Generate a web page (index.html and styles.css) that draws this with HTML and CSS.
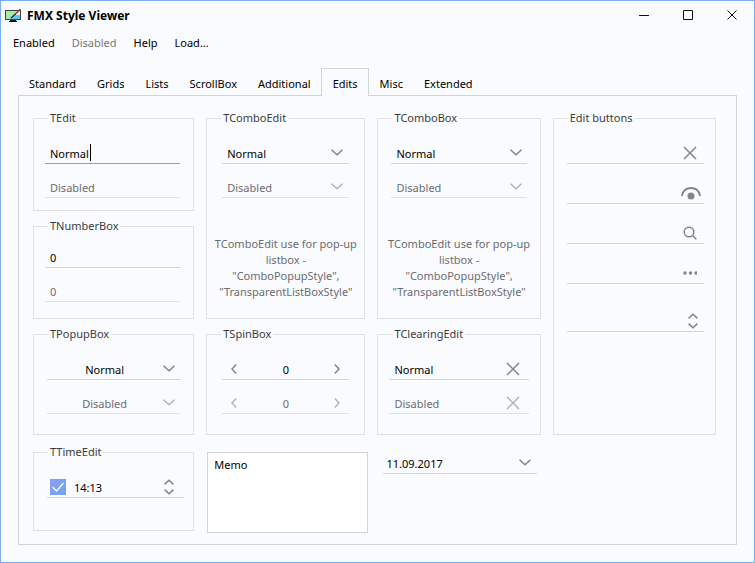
FILE: index.html
```html
<!doctype html>
<html lang="en">
  <head>
    <meta charset="utf-8">
    <meta name="viewport" content="width=device-width, initial-scale=1">

    <title>FMX Style Viewer</title>

    <link rel="stylesheet" href="styles.css">
  </head>
  <body>
    <!-- shared icons -->
    <svg class="sprite" aria-hidden="true">
      <symbol id="chevron" viewBox="0 0 12 7"><path d="M.5 .8 6 5.8 11.5 .8"/></symbol>
      <symbol id="left" viewBox="0 0 6 10"><path d="M5.2 .6 1 5 5.2 9.4"/></symbol>
      <symbol id="right" viewBox="0 0 6 10"><path d="M.8 .6 5 5 .8 9.4"/></symbol>
      <symbol id="cross" viewBox="0 0 14 14"><path d="M1 1 13 13M13 1 1 13"/></symbol>
      <symbol id="updown" viewBox="0 0 10 16"><path d="M.6 5.4 5 1.2 9.4 5.4M.6 10.6 5 14.8 9.4 10.6"/></symbol>
    </svg>

    <div class="window">
      <header class="titlebar">
        <svg class="logo" width="16" height="14" viewBox="0 0 16 14">
          <rect x="0" y="1" width="16" height="10" fill="#3c4448"/>
          <rect x="1" y="2" width="14" height="8" fill="#e6fbff"/>
          <path d="M1 2h11L6 10H1z" fill="#a6ee9e"/>
          <path d="M8 6h7v4H5z" fill="#5cc8f4"/>
          <path d="M5 11h6v1h1v1H4v-1h1z" fill="#111"/>
          <path d="M15.500 0 10 5.500" stroke="#b3262c" stroke-width="1.500"/>
          <path d="M10.500 5 6 9" stroke="#333" stroke-width="1.500"/>
        </svg>
        <h1>FMX Style Viewer</h1>
        <div class="window-buttons">
          <button type="button" aria-label="Minimize"><svg width="11" height="11"><path d="M0 5.500h10"/></svg></button>
          <button type="button" aria-label="Maximize"><svg width="11" height="11"><path d="M.5 .5h9v9h-9z"/></svg></button>
          <button type="button" aria-label="Close"><svg width="11" height="11"><path d="M.5 .5l9 9M9.500 .5l-9 9"/></svg></button>
        </div>
      </header>

      <nav class="menu">
        <button type="button">Enabled</button>
        <button type="button" disabled>Disabled</button>
        <button type="button">Help</button>
        <button type="button">Load...</button>
      </nav>

      <div class="tabs" role="tablist">
        <button type="button" role="tab">Standard</button>
        <button type="button" role="tab">Grids</button>
        <button type="button" role="tab">Lists</button>
        <button type="button" role="tab">ScrollBox</button>
        <button type="button" role="tab">Additional</button>
        <button type="button" role="tab" class="active" aria-selected="true">Edits</button>
        <button type="button" role="tab">Misc</button>
        <button type="button" role="tab">Extended</button>
      </div>

      <main class="panel" role="tabpanel">
        <fieldset>
          <legend>TEdit</legend>
          <div class="fields shifted">
            <div class="field focused">
              <input type="text" value="Normal" aria-label="Edit">
              <span class="caret"></span>
            </div>
            <div class="field disabled">
              <input type="text" value="Disabled" aria-label="Disabled edit" disabled>
            </div>
          </div>
        </fieldset>

        <fieldset class="tall">
          <legend>TComboEdit</legend>
          <div class="fields narrow">
            <div class="field">
              <input type="text" value="Normal" aria-label="Combo edit">
              <button type="button" aria-label="Open list"><svg width="12" height="7"><use href="#chevron"/></svg></button>
            </div>
            <div class="field disabled">
              <input type="text" value="Disabled" aria-label="Disabled combo edit" disabled>
              <button type="button" aria-label="Open list" disabled><svg width="12" height="7"><use href="#chevron"/></svg></button>
            </div>
          </div>
          <p>TComboEdit use for pop-up listbox - "ComboPopupStyle", "TransparentListBoxStyle"</p>
        </fieldset>

        <fieldset class="tall">
          <legend>TComboBox</legend>
          <div class="fields">
            <div class="field">
              <select aria-label="Combo box"><option>Normal</option></select>
              <svg class="arrow" width="12" height="7"><use href="#chevron"/></svg>
            </div>
            <div class="field disabled">
              <select aria-label="Disabled combo box" disabled><option>Disabled</option></select>
              <svg class="arrow" width="12" height="7"><use href="#chevron"/></svg>
            </div>
          </div>
          <p>TComboEdit use for pop-up listbox - "ComboPopupStyle", "TransparentListBoxStyle"</p>
        </fieldset>

        <fieldset class="taller">
          <legend>Edit buttons</legend>
          <div class="fields spaced">
            <div class="field">
              <input type="text" aria-label="Clear edit">
              <button type="button" aria-label="Clear"><svg width="14" height="14"><use href="#cross"/></svg></button>
            </div>
            <div class="field">
              <input type="text" aria-label="Password edit">
              <button type="button" class="flush" aria-label="Show password">
                <svg width="20" height="14" viewBox="0 0 20 14"><path d="M.8 10C2 4.500 5.500 2 10 2s8 2.500 9.200 8" stroke-width="1.800"/><circle class="solid" cx="10" cy="10" r="3.500"/></svg>
              </button>
            </div>
            <div class="field">
              <input type="text" aria-label="Search edit">
              <button type="button" aria-label="Search">
                <svg width="14" height="14" viewBox="0 0 14 14"><circle cx="6" cy="6" r="4.800"/><path d="M9.500 9.500 13.300 13.300"/></svg>
              </button>
            </div>
            <div class="field">
              <input type="text" aria-label="Ellipses edit">
              <button type="button" aria-label="More">
                <svg width="14" height="4" viewBox="1 0 14 4"><g class="solid"><circle cx="3" cy="2" r="1.700"/><circle cx="8.500" cy="2" r="1.700"/><circle cx="14" cy="2" r="1.700"/></g></svg>
              </button>
            </div>
            <div class="field last">
              <input type="text" aria-label="Spin edit">
              <button type="button" aria-label="Change value"><svg width="10" height="16"><use href="#updown"/></svg></button>
            </div>
          </div>
        </fieldset>

        <fieldset>
          <legend>TNumberBox</legend>
          <div class="fields shifted compact">
            <div class="field">
              <input type="text" inputmode="numeric" value="0" aria-label="Number">
            </div>
            <div class="field disabled">
              <input type="text" inputmode="numeric" value="0" aria-label="Disabled number" disabled>
            </div>
          </div>
        </fieldset>

        <fieldset>
          <legend>TPopupBox</legend>
          <div class="fields">
            <div class="field centered">
              <select aria-label="Popup box"><option>Normal</option></select>
              <svg class="arrow" width="12" height="7"><use href="#chevron"/></svg>
            </div>
            <div class="field centered disabled">
              <select aria-label="Disabled popup box" disabled><option>Disabled</option></select>
              <svg class="arrow" width="12" height="7"><use href="#chevron"/></svg>
            </div>
          </div>
        </fieldset>

        <fieldset>
          <legend>TSpinBox</legend>
          <div class="fields narrow">
            <div class="field spin">
              <button type="button" aria-label="Decrease"><svg width="6" height="10"><use href="#left"/></svg></button>
              <input type="text" value="0" aria-label="Spin box">
              <button type="button" aria-label="Increase"><svg width="6" height="10"><use href="#right"/></svg></button>
            </div>
            <div class="field spin disabled">
              <button type="button" aria-label="Decrease" disabled><svg width="6" height="10"><use href="#left"/></svg></button>
              <input type="text" value="0" aria-label="Disabled spin box" disabled>
              <button type="button" aria-label="Increase" disabled><svg width="6" height="10"><use href="#right"/></svg></button>
            </div>
          </div>
        </fieldset>

        <fieldset>
          <legend>TClearingEdit</legend>
          <div class="fields wide">
            <div class="field clearing">
              <input type="text" value="Normal" aria-label="Clearing edit">
              <button type="button" aria-label="Clear"><svg width="14" height="14"><use href="#cross"/></svg></button>
            </div>
            <div class="field clearing disabled">
              <input type="text" value="Disabled" aria-label="Disabled clearing edit" disabled>
              <button type="button" aria-label="Clear" disabled><svg width="14" height="14"><use href="#cross"/></svg></button>
            </div>
          </div>
        </fieldset>

        <fieldset class="time">
          <legend>TTimeEdit</legend>
          <div class="fields">
            <div class="field">
              <input type="checkbox" aria-label="Use time" checked>
              <input type="text" value="14:13" aria-label="Time">
              <button type="button" aria-label="Change time"><svg width="10" height="16"><use href="#updown"/></svg></button>
            </div>
          </div>
        </fieldset>

        <textarea class="memo" aria-label="Memo">Memo</textarea>

        <div class="field date">
          <input type="text" value="11.09.2017" aria-label="Date">
          <button type="button" aria-label="Open calendar"><svg width="12" height="7"><use href="#chevron"/></svg></button>
        </div>
      </main>
    </div>
  </body>
</html>
```
FILE: styles.css
```css
* {
  box-sizing: border-box;
}

body {
  margin: 0;
  background: #fafbfe;
  color: #000;
  font-family: "Noto Sans", "Open Sans", sans-serif;
  font-size: 11px;
  line-height: 16px;
}
button,
input,
select,
textarea {
  margin: 0;
  padding: 0;
  border: 0;
  border-radius: 0;
  outline: 0;
  background: none;
  color: inherit;
  font: inherit;
}
svg {
  display: block;
  fill: none;
  stroke: #858585;
  stroke-width: 1.5;
}
.solid {
  fill: #858585;
  stroke: none;
}
.sprite {
  position: absolute;
  width: 0;
  height: 0;
}
.window {
  display: flex;
  flex-direction: column;
  min-height: 100vh;
  border: 1px solid #78adf6;
}

/* title bar and menu */
.titlebar {
  display: flex;
  align-items: center;
  height: 29px;
  padding-left: 4px;
}
.logo {
  stroke: none;
}
.titlebar h1 {
  flex: 1;
  margin: 0 0 0 6px;
  font-size: 12px;
  font-weight: bold;
}
.window-buttons {
  display: flex;
}
.window-buttons button {
  display: flex;
  align-items: center;
  justify-content: center;
  width: 44px;
  height: 29px;
}
.window-buttons svg {
  stroke: #111;
  stroke-width: 1;
}
.menu {
  display: flex;
  gap: 17px;
  padding: 5px 12px;
}
.menu button:disabled {
  color: #77787b;
}

/* tabs */
.tabs {
  display: flex;
  margin: 12px 17px 0;
}
.tabs button {
  height: 27px;
  padding: 4px 10px 0 11px;
}
.tabs button.active {
  margin-bottom: -1px;
  height: 28px;
  padding-bottom: 1px;
  border: 1px solid #d0d5d8;
  border-bottom: 0;
  background: #fafbfe;
  z-index: 1;
}
.panel {
  display: grid;
  flex: 1;
  grid-template-columns: minmax(0, 161fr) minmax(0, 159fr) minmax(0, 163fr) minmax(0, 163fr);
  grid-template-rows: repeat(2, minmax(101px, auto)) minmax(109px, auto) auto;
  align-content: start;
  gap: 7px 12px;
  margin: 0 17px 17px;
  padding: 14px 20px 11px 14px;
  border: 1px solid #d0d5d8;
}

/* group boxes */
fieldset {
  min-width: 0;
  margin: 0;
  padding: 0;
  border: 1px solid #dfe1e3;
}
legend {
  margin-left: 14px;
  padding: 0 2px;
  color: #3c3c3c;
}
fieldset p {
  margin: 38px 0 0;
  padding: 0 6px;
  color: #6c6d70;
  text-align: center;
}
.tall {
  grid-row: span 2;
}
.taller {
  grid-row: span 3;
}
.fields {
  display: flex;
  flex-direction: column;
  gap: 10px;
  padding: 14px 13px 0;
}
.fields.narrow {
  padding: 14px 15px 0;
}
.fields.wide {
  padding: 14px 11px 0;
}
.fields.shifted {
  padding: 14px 13px 0 11px;
}
.fields.compact {
  padding-top: 10px;
}
.fields.spaced {
  gap: 16px;
  padding-right: 11px;
}

/* edits */
.field {
  display: flex;
  align-items: center;
  position: relative;
  height: 24px;
  padding: 2px 5px 0;
  border-bottom: 1px solid #d2d4d6;
}
.field input,
.field select {
  flex: 1;
  min-width: 0;
  height: 21px;
  padding-top: 2px;
}
.field select {
  appearance: none;
  opacity: 1;
}
.field.disabled {
  border-color: #e1e2e5;
  color: #6c6d70;
}
.field.disabled svg {
  opacity: 0.6;
}
.field.focused {
  border-color: #7ba1ee;
}
.field .arrow {
  pointer-events: none;
}
.field.centered select {
  padding-right: 6px;
  text-align-last: center;
}
.caret {
  position: absolute;
  top: 4px;
  left: 45px;
  width: 1px;
  height: 17px;
  background: #000;
}
.narrow .field {
  padding-right: 6px;
}
.narrow .field.spin {
  padding: 2px 9px 0;
}
.field.spin input {
  text-align: center;
}
.field.clearing {
  padding-right: 9px;
}
.spaced .field {
  padding-right: 7px;
}
.spaced .flush {
  margin-right: -4px;
}
.spaced .last {
  margin-top: 8px;
  padding-right: 6px;
}
.time {
  align-self: start;
  min-height: 87px;
  margin-top: 2px;
}
.time .field {
  margin-right: -4px;
  padding: 2px 10px 0 3px;
}
.time input[type="checkbox"] {
  flex: none;
  appearance: none;
  width: 16px;
  height: 16px;
  margin-right: 8px;
  background: url("data:image/svg+xml,%3Csvg xmlns='http://www.w3.org/2000/svg' viewBox='0 0 16 16'%3E%3Cpath d='M2.500 8 6.500 12 13.500 4' fill='none' stroke='white' stroke-width='1.200'/%3E%3C/svg%3E"), linear-gradient(135deg, #8a9ff6, #6fa5ef);
}
.memo {
  margin: 10px 0 0 1px;
  width: 161px;
  height: 81px;
  padding: 4px 6px;
  border: 1px solid #d0d5d8;
  background: #fff;
  resize: none;
}
.date {
  margin: 8px 4px 0 6px;
  padding: 2px 6px 0 3px;
}
```
